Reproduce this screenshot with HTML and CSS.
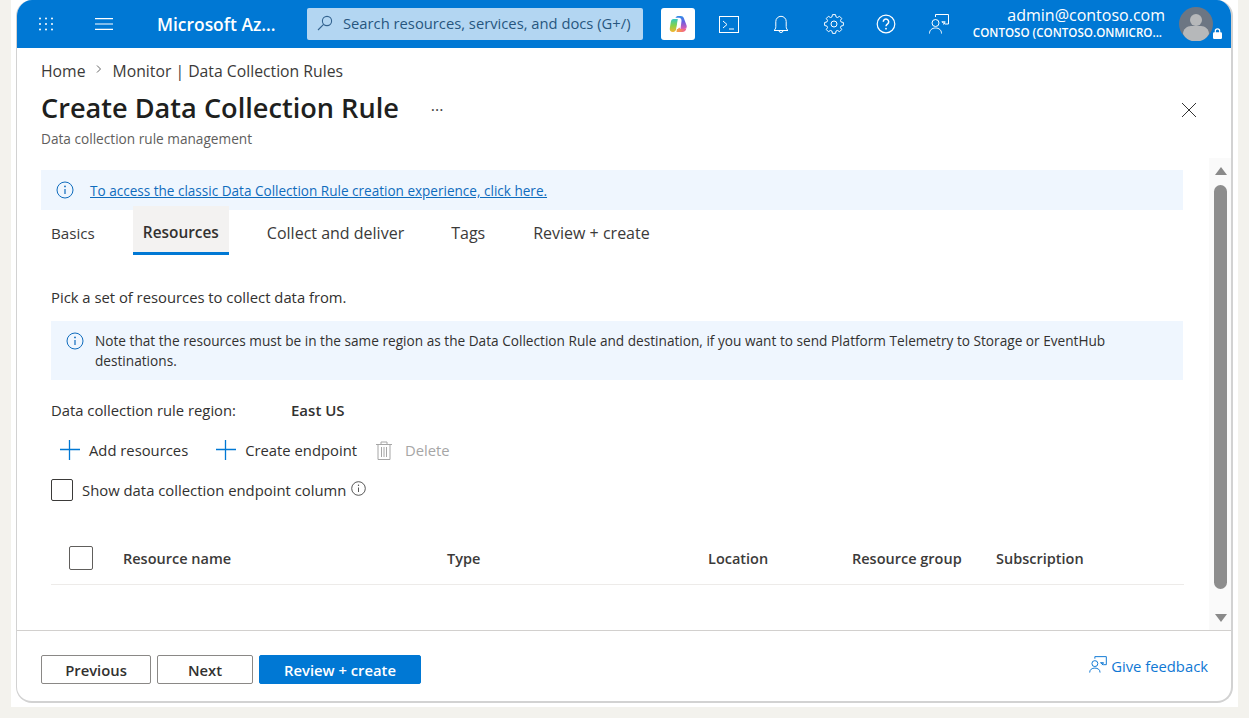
FILE: index.html
```html
<!DOCTYPE html>
<html lang="en">
<head>
<meta charset="utf-8">
<title>Create Data Collection Rule</title>
<link rel="stylesheet" href="styles.css">
</head>
<body>
<div class="frame">
<div class="card">
  <header class="topbar">
    <button class="tb-btn waffle" aria-label="Portal menu">
      <svg width="16" height="14" viewBox="0 0 16 14" fill="#fff"><circle cx="2" cy="1.5" r="1"/><circle cx="8" cy="1.5" r="1"/><circle cx="14" cy="1.5" r="1"/><circle cx="2" cy="7" r="1"/><circle cx="8" cy="7" r="1"/><circle cx="14" cy="7" r="1"/><circle cx="2" cy="12.5" r="1"/><circle cx="8" cy="12.5" r="1"/><circle cx="14" cy="12.5" r="1"/></svg>
    </button>
    <button class="tb-btn burger" aria-label="Menu">
      <svg width="18" height="12" viewBox="0 0 18 12" stroke="#fff" stroke-width="1.2"><path d="M0 .6h18M0 6h18M0 11.4h18"/></svg>
    </button>
    <div class="brand">Microsoft Az...</div>
    <div class="search">
      <svg width="16" height="16" viewBox="0 0 16 16" fill="none" stroke="#33638f" stroke-width="1.1"><circle cx="10" cy="6" r="4.6"/><path d="M6.6 9.4 1 15"/></svg>
      <span>Search resources, services, and docs (G+/)</span>
    </div>
    <button class="copilot" aria-label="Copilot">
      <svg width="19" height="18" viewBox="0 0 19 18"><defs>
        <linearGradient id="cpa" x1="0" y1="0" x2="0" y2="1"><stop offset="0" stop-color="#2f8fe8"/><stop offset=".45" stop-color="#6a5de0"/><stop offset="1" stop-color="#e05fb0"/></linearGradient>
        <linearGradient id="cpb" x1="0" y1="0" x2="0" y2="1"><stop offset="0" stop-color="#32c8c0"/><stop offset=".5" stop-color="#86d24a"/><stop offset="1" stop-color="#f6b52e"/></linearGradient>
        <linearGradient id="cpc" x1="0" y1="0" x2="1" y2="0"><stop offset="0" stop-color="#f7a63c"/><stop offset="1" stop-color="#f0589a"/></linearGradient></defs>
        <path d="M6.500 2.800C7 1.500 8 1 9.500 1h2.300c1.500 0 2.500.7 3 2l2.800 7.500c.6 1.800-.4 3.500-2.300 3.500h-3.800l1-8c.2-1.800-.8-3.200-2.500-3.200z" fill="url(#cpa)"/>
        <path d="M4.500 4h4.300L7.300 13.500C7 15.500 5.800 17 4 17 1.800 17 .4 15.500.8 13.300l1-6.300C2.100 5 3 4 4.500 4z" fill="url(#cpb)"/>
        <path d="M7.500 17h6c1.800 0 3-1 3.500-2.500l.3-1.500c-.5.700-1.200 1-2.300 1h-3.500l-1.300-1.500L8 14c-.2 1.200-.6 2.300-.5 3z" fill="url(#cpc)"/>
        <path d="M9.300 4.500h1.700L9.200 14H7.500z" fill="#fff"/>
      </svg>
    </button>
    <button class="tb-btn icon first" aria-label="Cloud Shell">
      <svg width="20" height="17" viewBox="0 0 20 17" fill="none" stroke="#fff" stroke-width="1"><rect x=".5" y=".5" width="19" height="16"/><path d="M4 5l4 3.500-4 3.500M10 13h5"/></svg>
    </button>
    <button class="tb-btn icon" aria-label="Notifications">
      <svg width="16" height="19" viewBox="0 0 16 19" fill="none" stroke="#fff" stroke-width="1"><path d="M1 15.500c1-.8 1.800-2 1.800-4V6.500a5.200 5.200 0 0 1 10.400 0v5c0 2 .8 3.200 1.800 4z"/><path d="M6 15.500a2 2 0 0 0 4 0"/></svg>
    </button>
    <button class="tb-btn icon" aria-label="Settings">
      <svg width="20" height="20" viewBox="-10 -10 20 20" fill="none" stroke="#fff" stroke-width="1" stroke-linejoin="round"><circle r="3"/><polygon points="6.98,-2.13 9.38,-1.49 9.38,1.49 6.98,2.13 6.44,3.43 7.69,5.58 5.58,7.69 3.43,6.44 2.13,6.98 1.49,9.38 -1.49,9.38 -2.13,6.98 -3.43,6.44 -5.58,7.69 -7.69,5.58 -6.44,3.43 -6.98,2.13 -9.38,1.49 -9.38,-1.49 -6.98,-2.13 -6.44,-3.43 -7.69,-5.58 -5.58,-7.69 -3.43,-6.44 -2.13,-6.98 -1.49,-9.38 1.49,-9.38 2.13,-6.98 3.43,-6.44 5.58,-7.69 7.69,-5.58 6.44,-3.43"/></svg>
    </button>
    <button class="tb-btn icon" aria-label="Help">
      <svg width="20" height="20" viewBox="0 0 20 20" fill="none" stroke="#fff" stroke-width="1.200"><circle cx="10" cy="10" r="8.800"/><path d="M7.300 7.700a2.700 2.700 0 1 1 4.300 2.200c-1 .7-1.600 1.200-1.600 2.400" stroke-width="1.500"/><circle cx="10" cy="14.700" r=".9" fill="#fff" stroke="none"/></svg>
    </button>
    <button class="tb-btn icon" aria-label="Feedback">
      <svg width="20" height="20" viewBox="0 0 20 20" fill="none" stroke="#fff" stroke-width="1"><circle cx="6.500" cy="9" r="3.500"/><path d="M.5 19.500c0-3.500 2.500-5.500 6-5.500s6 2 6 5.500M6.500 3V.5h13v9.500h-3.500M16 10l-3.200-2.200h3.400L14.500 10.500"/></svg>
    </button>
    <div class="account">
      <div class="acct-name">admin@contoso.com</div>
      <div class="acct-dir">CONTOSO (CONTOSO.ONMICRO...</div>
    </div>
    <div class="avatar">
      <svg width="34" height="34" viewBox="0 0 34 34"><circle cx="17" cy="17" r="17" fill="#6c7683"/><circle cx="17" cy="13" r="6" fill="#b6b8ba"/><path d="M4 27c0-5 4-8 8-8h10c4 0 8 3 8 8a15 15 0 0 1-26 0z" fill="#b6b8ba"/></svg>
      <svg class="lock" width="9" height="11" viewBox="0 0 9 11"><path d="M2.300 5V3a2.200 2.200 0 0 1 4.400 0v2" fill="none" stroke="#fff" stroke-width="1.200"/><rect y="4.300" width="9" height="6.700" rx="1.200" fill="#fff"/></svg>
    </div>
  </header>

  <section class="blade-head">
    <nav class="crumbs"><span>Home</span><svg width="6" height="8" viewBox="0 0 6 8" fill="none" stroke="#555" stroke-width=".9"><path d="M1 .5 4.500 4 1 7.500"/></svg><span>Monitor | Data Collection Rules</span></nav>
    <div class="title-row">
      <h1>Create Data Collection Rule</h1>
      <span class="more">···</span>
      <svg class="close" width="16" height="16" viewBox="0 0 16 16" stroke="#333" stroke-width="1"><path d="M1 1l14 14M15 1 1 15"/></svg>
    </div>
    <p class="subtitle">Data collection rule management</p>
  </section>

  <main class="body">
    <div class="scroll">
      <div class="banner top-banner">
        <svg class="info" width="18" height="18" viewBox="0 0 18 18" fill="none" stroke="#0f6cbd"><circle cx="9" cy="9" r="8"/><path d="M9 8v5" stroke-width="1.200"/><circle cx="9" cy="5.400" r=".9" fill="#0f6cbd" stroke="none"/></svg>
        <a href="#">To access the classic Data Collection Rule creation experience, click here.</a>
      </div>
      <div class="tabs">
        <div class="tab basics">Basics</div>
        <div class="tab active">Resources</div>
        <div class="tab">Collect and deliver</div>
        <div class="tab">Tags</div>
        <div class="tab">Review + create</div>
      </div>
      <div class="panel">
        <p class="lead">Pick a set of resources to collect data from.</p>
        <div class="banner note">
          <svg class="info" width="18" height="18" viewBox="0 0 18 18" fill="none" stroke="#0f6cbd"><circle cx="9" cy="9" r="8"/><path d="M9 8v5" stroke-width="1.200"/><circle cx="9" cy="5.400" r=".9" fill="#0f6cbd" stroke="none"/></svg>
          <span>Note that the resources must be in the same region as the Data Collection Rule and destination, if you want to send Platform Telemetry to Storage or EventHub destinations.</span>
        </div>
        <div class="region"><span class="region-label">Data collection rule region:</span><strong>East US</strong></div>
        <div class="toolbar">
          <div class="cmd add"><svg width="20" height="20" viewBox="0 0 20 20" stroke="#0078d4" stroke-width="1.300"><path d="M9.500 0v20M0 9.500h20"/></svg><span>Add resources</span></div>
          <div class="cmd endpoint"><svg width="20" height="20" viewBox="0 0 20 20" stroke="#0078d4" stroke-width="1.300"><path d="M9.500 0v20M0 9.500h20"/></svg><span>Create endpoint</span></div>
          <div class="cmd disabled"><svg width="16" height="19" viewBox="0 0 16 19" fill="none" stroke="#a6a6a6" stroke-width="1"><path d="M0 3.500h16M5 3.500V1h6v2.500M2 3.500v15h12v-15M5.500 6v10M8 6v10M10.500 6v10"/></svg><span>Delete</span></div>
        </div>
        <label class="show-col"><span class="box"></span><span>Show data collection endpoint column</span>
          <svg width="15" height="15" viewBox="0 0 15 15" fill="none" stroke="#444" stroke-width=".9"><circle cx="7.500" cy="7.500" r="6.800"/><path d="M7.500 6.500v4.500"/><circle cx="7.500" cy="4.300" r=".7" fill="#444" stroke="none"/></svg>
        </label>
        <div class="grid-head">
          <div class="c-check"><span class="box"></span></div>
          <div class="c-name">Resource name</div>
          <div class="c-type">Type</div>
          <div class="c-loc">Location</div>
          <div class="c-rg">Resource group</div>
          <div class="c-sub">Subscription</div>
        </div>
      </div>
    </div>
    <div class="scrollbar">
      <span class="arrow up"></span>
      <span class="thumb"></span>
      <span class="arrow down"></span>
    </div>
  </main>

  <footer class="foot">
    <button class="btn">Previous</button>
    <button class="btn next">Next</button>
    <button class="btn primary">Review + create</button>
    <a class="feedback" href="#">
      <svg width="18" height="17" viewBox="0 0 20 19" fill="none" stroke="#0f78d4" stroke-width="1.100"><circle cx="6.500" cy="8.500" r="3.300"/><path d="M.7 18.500c0-3.300 2.500-5 5.800-5s5.800 1.700 5.800 5M6.500 3V.7h12.800v9h-3.300M16 9.700l-3.200-2.200h3.400l-1.700 2.700"/></svg>
      <span>Give feedback</span>
    </a>
  </footer>
</div>
</div>
</body>
</html>
```
FILE: styles.css
```css
* { box-sizing: border-box; }
html, body { margin: 0; height: 100%; }
body {
  background: #f3f2ed;
  font-family: "Open Sans", "Noto Sans", "Liberation Sans", sans-serif;
  color: #323130;
  font-size: 14.8px;
  overflow: hidden;
}
button { font-family: inherit; border: 0; background: none; padding: 0; }

.frame {
  width: 1227px;
  height: 707px;
  margin-left: 11px;
  padding: 0 5px 4px;
  background: #fff;
}
.card {
  height: 703px;
  display: flex;
  flex-direction: column;
  border: 1px solid #d2d2d2;
  border-width: 0 2px 2px 1px;
  border-radius: 16px;
  overflow: hidden;
  background: #fff;
}

/* top bar */
.topbar {
  flex: none;
  height: 48px;
  display: flex;
  align-items: center;
  background: #0078d4;
  color: #fff;
}
.tb-btn { display: flex; align-items: center; justify-content: center; height: 48px; }
.waffle { width: 58px; }
.burger { width: 57px; }
.brand { width: 175px; padding-left: 25px; font-size: 17.400px; font-weight: 600; white-space: nowrap; }
.search {
  width: 336px;
  height: 32px;
  display: flex;
  align-items: center;
  gap: 10px;
  padding: 0 0 2px 10px;
  background: #b3d6f2;
  border-radius: 2px;
  color: #27567f;
  font-size: 14.750px;
  white-space: nowrap;
}
.copilot {
  width: 34px;
  height: 32px;
  margin-left: 18px;
  display: flex;
  align-items: center;
  justify-content: center;
  background: #fff;
  border-radius: 3px;
}
.icon { width: 52.500px; }
.first { margin-left: 7.500px; }
.account { flex: 1; text-align: right; margin-right: 14px; min-width: 0; white-space: nowrap; }
.acct-name { font-size: 16px; line-height: 18px; margin-top: -2px; }
.acct-dir { font-size: 11.600px; font-weight: 600; line-height: 17px; padding-right: 3px; }
.avatar { position: relative; width: 34px; height: 34px; margin-right: 18px; }
.avatar > svg { display: block; }
.avatar .lock { position: absolute; right: -9px; bottom: 2px; }

/* blade head */
.blade-head { flex: none; height: 110px; padding: 13px 24px 0; }
.crumbs { display: flex; align-items: center; gap: 10px; height: 20px; font-size: 15.750px; color: #3b3a39; }
.crumbs svg { margin: -4px 1px 0 0; }
.title-row { display: flex; align-items: center; height: 36px; margin-top: 8px; }
h1 { margin: 0; font-size: 27.150px; font-weight: 600; color: #201f1e; white-space: nowrap; }
.more { margin: 5px 0 0 32px; font-size: 16px; color: #444; }
.close { margin-left: auto; margin-right: 10px; margin-top: 5px; }
.subtitle { margin: 5px 0 0; font-size: 13.650px; color: #605e5c; line-height: 18px; }

/* scrolling body */
.body { flex: 1; min-height: 0; display: flex; }
.scroll { flex: 1; min-width: 0; padding: 12px 0 0 24px; }
.banner { display: flex; background: #eff6fe; }
.top-banner { width: 1142px; height: 40px; align-items: center; padding-left: 15px; gap: 16px; }
.top-banner a { color: #0f6cbd; font-size: 13.550px; white-space: nowrap; padding-top: 2px; }
.info { flex: none; }
.tabs { display: flex; height: 52px; margin-top: -4px; }
.tab { display: flex; align-items: center; padding: 2px 10px 0; font-size: 16px; color: #3b3a39; margin-right: 28px; }
.tab:nth-child(3) { margin-right: 27px; }
.basics { font-size: 15.200px; }
.active { background: #f3f2f1; font-size: 15.400px; font-weight: 600; border-bottom: 3px solid #0078d4; height: 49px; padding-top: 6px; color: #323130; }
.panel { padding: 29px 0 0 10px; width: 1142px; }
.lead { margin: 0; line-height: 20px; }
.note { margin-top: 14px; height: 59px; padding: 10px 24px 0 15px; gap: 11px; font-size: 13.650px; line-height: 20px; }
.note .info { margin-top: 1px; }
.region { margin-top: 20px; display: flex; line-height: 20px; }
.region-label { width: 240px; }
.region strong { font-weight: 600; font-size: 15px; }
.toolbar { display: flex; align-items: center; height: 30px; margin-top: 15px; }
.cmd { display: flex; align-items: center; font-size: 14.800px; }
.cmd span { margin-left: 9px; }
.add { margin-left: 9px; }
.endpoint { margin-left: 28px; }
.disabled { margin-left: 19px; color: #a6a6a6; }
.disabled span { margin-left: 13px; }
.show-col { display: flex; align-items: center; height: 24px; margin-top: 13px; font-size: 14.850px; }
.show-col > span:nth-child(2) { margin-left: 9px; }
.show-col svg { margin: -4px 0 0 5px; }
.box { display: block; width: 22px; height: 22px; border: 1px solid #3b3a39; border-radius: 2px; background: #fff; }
.grid-head {
  display: flex;
  align-items: center;
  height: 54px;
  margin: 29px -1px 0 0;
  padding-top: 1px;
  border-bottom: 1px solid #edebe9;
  font-weight: 600;
  font-size: 14.500px;
  color: #3b3a39;
}
.c-check { width: 72px; padding-left: 18px; }
.c-check .box { width: 24px; height: 24px; border-color: #605e5c; }
.c-name { width: 324px; }
.c-type { width: 261px; }
.c-loc { width: 144px; }
.c-rg { width: 144px; }

/* scrollbar */
.scrollbar { flex: none; width: 22px; margin-left: 26px; display: flex; flex-direction: column; align-items: center; background: #fafafa; }
.arrow { display: block; width: 0; height: 0; border-left: 6px solid transparent; border-right: 6px solid transparent; margin-left: 1px; }
.up { margin-top: 9px; border-bottom: 8px solid #8a8a8a; }
.down { margin-top: 25px; border-top: 8px solid #8a8a8a; }
.thumb { display: block; width: 13px; height: 404px; margin: 10px 0 0 1px; background: #8d8d8d; border-radius: 7px; }

/* footer */
.foot { flex: none; height: 71px; border-top: 1px solid #d2d0ce; display: flex; align-items: flex-start; padding: 24px 23px 0 24px; }
.btn { width: 110px; height: 29px; padding-top: 1px; border: 1px solid #8a8886; border-radius: 2px; background: #fff; font-size: 14.800px; font-weight: 600; color: #323130; }
.next { width: 96px; margin-left: 6px; }
.primary { width: 162px; margin-left: 6px; background: #0078d4; border-color: #0078d4; color: #fff; }
.feedback { margin-left: auto; margin-top: 1px; display: flex; align-items: center; gap: 4px; color: #0f78d4; font-size: 14.800px; text-decoration: none; }
.feedback svg { margin-top: -4px; }
```
